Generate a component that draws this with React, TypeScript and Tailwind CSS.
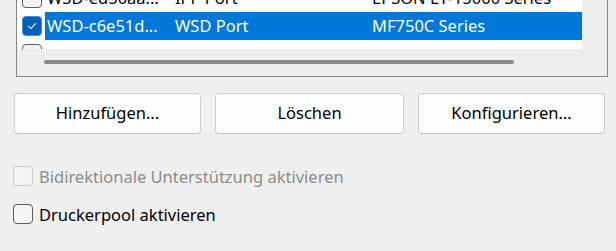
const font = "font-['Noto_Sans',sans-serif]";

function Box({ checked, disabled }: { checked?: boolean; disabled?: boolean }) {
  if (checked) {
    return (
      <div className="w-[20px] h-[20px] rounded-[4px] bg-[#005fb8] border border-[#3d8fd9] flex items-center justify-center">
        <svg width="10" height="8" viewBox="0 0 10 8" fill="none">
          <path d="M1.2 4.2 L3.8 6.6 L8.8 1.4" stroke="white" strokeWidth="1.1" />
        </svg>
      </div>
    );
  }
  return (
    <div
      className={
        disabled
          ? "w-[20px] h-[20px] rounded-[4px] border border-[#c8c8c8] bg-[#f5f5f5]"
          : "w-[20px] h-[20px] rounded-[4px] border border-[#5c5c5c] bg-[#f5f5f5]"
      }
    />
  );
}

type Row = { name: string; port: string; model: string; checked?: boolean; selected?: boolean };

const rows: Row[] = [
  { name: "WSD-ed50aa...", port: "IPP Port", model: "EPSON ET-15000 Series" },
  { name: "WSD-c6e51d...", port: "WSD Port", model: "MF750C Series", checked: true, selected: true },
  { name: "", port: "", model: "" },
];

function ListRow({ row }: { row: Row }) {
  return (
    <div className="flex items-center h-[28px]">
      <div className="w-[28px] pl-[5px] flex items-center">
        <Box checked={row.checked} />
      </div>
      <div
        className={
          row.selected
            ? "flex-1 flex items-center h-full bg-[#0078d7] text-white"
            : "flex-1 flex items-center h-full text-black"
        }
      >
        <span className="w-[130px] pl-[2px] whitespace-nowrap">{row.name}</span>
        <span className="w-[197px] whitespace-nowrap">{row.port}</span>
        <span className="whitespace-nowrap">{row.model}</span>
      </div>
    </div>
  );
}

export default function App() {
  return (
    <div className={`w-[616px] h-[251px] overflow-hidden bg-[#f0f0f0] text-[16.5px] ${font}`}>
      <div className="ml-[16px] w-[592px] border-x border-b border-[#868686] h-[77px] flex flex-col">
        <div className="flex h-[49px]">
          <div className="flex-1 bg-white overflow-hidden">
            <div className="-mt-[16px]">
              {rows.map((r, i) => (
                <ListRow key={i} row={r} />
              ))}
            </div>
          </div>
          <div className="w-[25px] bg-[#eeeeee]" />
        </div>
        <div className="flex-1 bg-[#eeeeee] pt-[11px] pl-[27px]">
          <div className="w-[470px] h-[4px] rounded-full bg-[#8a8a8a]" />
        </div>
      </div>

      <div className="flex gap-[14px] ml-[14px] mt-[16px]">
        {["Hinzufügen...", "Löschen", "Konfigurieren..."].map((t, i) => (
          <button
            key={t}
            className={`${i === 1 ? "w-[189px]" : "w-[187px]"} h-[41px] rounded-[4px] border border-[#d0d0d0] border-b-[#c2c2c2] bg-[#fdfdfd] text-black`}
          >
            {t}
          </button>
        ))}
      </div>

      <div className="ml-[13px] mt-[32px] flex flex-col gap-[18px]">
        <div className="flex items-center gap-[6px] h-[20px]">
          <Box disabled />
          <span className="text-[#8c8c8c] pt-[2px]">Bidirektionale Unterstützung aktivieren</span>
        </div>
        <div className="flex items-center gap-[6px] h-[20px]">
          <Box />
          <span className="text-black pt-[2px]">Druckerpool aktivieren</span>
        </div>
      </div>
    </div>
  );
}
